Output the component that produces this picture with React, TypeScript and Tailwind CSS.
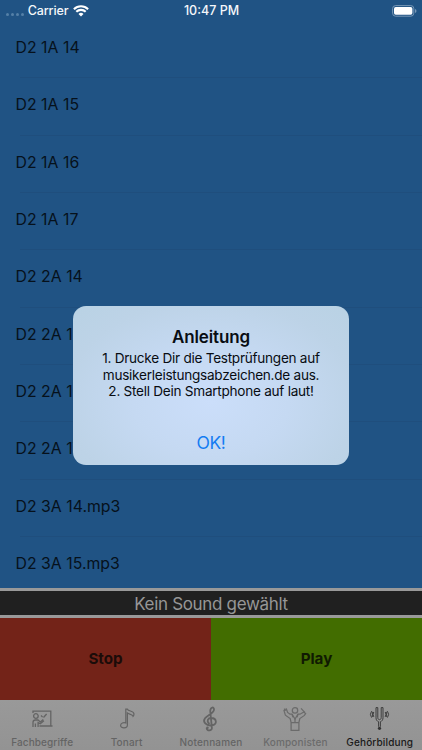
import React from "react";

const sounds = [
  "D2 1A 14",
  "D2 1A 15",
  "D2 1A 16",
  "D2 1A 17",
  "D2 2A 14",
  "D2 2A 15",
  "D2 2A 16",
  "D2 2A 17",
  "D2 3A 14.mp3",
  "D2 3A 15.mp3",
];

function StatusBar() {
  return (
    <div className="flex h-[21px] shrink-0 items-center pt-px text-[12.5px] font-medium text-[#f4f7fa]">
      <div className="flex flex-1 items-center pl-[6px]">
        <div className="mt-[7px] flex gap-[1.7px]">
          {[0, 1, 2, 3].map((i) => (
            <span key={i} className="h-[3.2px] w-[3.2px] rounded-full bg-[#5580a7]" />
          ))}
        </div>
        <span className="ml-[4px] tracking-[-0.15px]">Carrier</span>
        <svg className="ml-[5px]" width="16" height="12" viewBox="0 0 16 12" fill="none" stroke="#fff" strokeWidth="2.1">
          <path d="M.9 4.2a10.2 10.2 0 0 1 14.2 0M3.3 6.8a6.7 6.7 0 0 1 9.4 0" />
          <path d="M5.5 8.9a3.6 3.6 0 0 1 5 0L8 11.6z" fill="#fff" stroke="none" />
        </svg>
      </div>
      <span>10:47 PM</span>
      <div className="flex flex-1 justify-end pr-[5px] pb-px">
        <svg width="25" height="12" viewBox="0 0 25 12">
          <rect x=".6" y=".6" width="21.2" height="10.6" rx="3" fill="none" stroke="#7898b7" />
          <rect x="2" y="2" width="18.4" height="7.8" rx="1.7" fill="#fff" />
          <path d="M23 4v4q1.5-.5 1.5-2T23 4" fill="#7898b7" />
        </svg>
      </div>
    </div>
  );
}

function BoardIcon() {
  return (
    <svg className="ml-px" width="21" height="18" viewBox="0 0 21 18" fill="none" stroke="currentColor" strokeWidth="1.3">
      <path d="M1 3V1.2h17.8v14.3M7.5 16h13" />
      <circle cx="3.9" cy="6" r="2.3" />
      <path d="M1 17v-4.6q0-2.4 2.4-2.4H6l2.3 2 3-2.6M3.4 17v-3.6M6.1 17v-4.4l2.2 1.2 3.6-3M9 5.5l1.6 1.6M11.5 7.5 14.6 4" />
    </svg>
  );
}

function NoteIcon() {
  return (
    <svg className="ml-px" width="17" height="21" viewBox="0 0 17 21" fill="none" stroke="currentColor" strokeWidth="1.2">
      <path d="M6.8 15V1.2h1.6c1 2.2 6.6 1.6 6.6 4.8 0 1-.3 1.8-.9 2.4C13.3 6 10 6.4 8.4 5v12c0 3.8-6.8 3.6-6.8.6 0-2.6 3-3.4 5.2-2.6z" />
    </svg>
  );
}

function ClefIcon() {
  return (
    <svg width="19" height="26" viewBox="0 0 19 26" fill="none" stroke="currentColor" strokeWidth="1.8" strokeLinecap="round">
      <path d="M8 17.5c-2.6-2.2-1.2-5.5 2.2-5.5 5.4 0 6.8 6.6.6 7.4-5.6.7-9.5-3.6-6.8-7.2 2.4-3.1 8.4-4.6 9-8.4.2-3.4-3.4-3-3.8 1l1.7 17c.3 3.3-5 3.5-5.2.6" />
      <circle cx="6.5" cy="21.8" r="1.2" fill="currentColor" stroke="none" />
    </svg>
  );
}

function ConductorIcon() {
  return (
    <svg width="24" height="26" viewBox="0 0 24 26" fill="none" stroke="currentColor" strokeWidth="1.25">
      <circle cx="12" cy="4.4" r="2.7" />
      <path d="M9 8.2H7L4.6 6.4 3.6 3.6 1 4.6l1.4 4.6 4.8 3.4.9 3.9V24.4h7.8V16.5l.9-3.9 4.6-3.2 1.2-1.8-1.8-1.6L17 8.2h-2L12 13z" />
      <path d="M8.1 16.6h7.8M12 13v4M9 8.2l1 3M15 8.2l-1 3M21.8 6.4 18 2.4M2 4.2 1.2 2.6M3.2 3.7V2.2" />
    </svg>
  );
}

function ForkIcon() {
  return (
    <svg width="21" height="25" viewBox="0 0 21 25" fill="none" stroke="#3d3d3d" strokeWidth="1">
      <path d="M7 1.6v10.2c0 2 1 3.4 2.6 3.9v5.1M14 1.6v10.2c0 2-1 3.4-2.6 3.9v5.1M8.8 1.6v10c0 2.8 3.4 2.8 3.4 0v-10M7 1.6h1.8M12.2 1.6H14" />
      <circle cx="10.5" cy="22.3" r="1.6" fill="#333" stroke="none" />
      <path d="M2.6 5.2q-2.4 3.2 0 6.4M4.8 6q-1.8 2.4 0 4.8M3.7 5.8v5.2M18.4 5.2q2.4 3.2 0 6.4M16.2 6q1.8 2.4 0 4.8M17.3 5.8v5.2" />
    </svg>
  );
}

const tabs = [
  { label: "Fachbegriffe", icon: <BoardIcon />, style: "text-[#646464] tracking-[0.1px]" },
  { label: "Tonart", icon: <NoteIcon />, style: "text-[#646464] tracking-[0.15px]" },
  { label: "Notennamen", icon: <ClefIcon />, style: "text-[#646464] tracking-[0.15px]" },
  { label: "Komponisten", icon: <ConductorIcon />, style: "text-[#6b6b6b] tracking-[0.15px]" },
  { label: "Gehörbildung", icon: <ForkIcon />, style: "text-[#191919] tracking-[0.15px]" },
];

export default function App() {
  return (
    <main className="relative flex h-[750px] w-[422px] flex-col overflow-hidden bg-[#999] font-['Inter','Liberation_Sans',sans-serif]">
      <section className="flex h-[588px] shrink-0 flex-col overflow-hidden bg-[#205384]">
        <StatusBar />
        <ul className="shrink-0">
          {sounds.map((sound) => (
            <li key={sound} className="flex h-[57.35px] flex-col pl-[15.5px]">
              <span className="flex flex-1 items-center pb-[3px] text-[15.8px] tracking-[0.03px] text-[#06111b]">{sound}</span>
              <span className="ml-1 h-px bg-[#1f4e7d]" />
            </li>
          ))}
        </ul>
      </section>
      <div className="mt-[3px] flex h-[24px] shrink-0 items-center justify-center bg-[#202020] pt-[3px] text-[17px] tracking-[-0.32px] text-[#969696]">
        <span>Kein Sound gewählt</span>
      </div>
      <div className="mt-[3px] grid h-[82px] shrink-0 grid-cols-2 text-[15.2px] font-bold">
        <button className="bg-[#732318] text-[#1b0c09]">Stop</button>
        <button className="bg-[#426d00] text-[#101a02]">Play</button>
      </div>
      <nav className="grid flex-1 grid-cols-5 bg-linear-to-b from-[#999] to-[#939393]">
        {tabs.map((tab) => (
          <div key={tab.label} className={`flex flex-col items-center ${tab.style}`}>
            <div className="flex h-[37px] items-center justify-center">{tab.icon}</div>
            <span className="text-[10px] leading-[11px] font-medium">{tab.label}</span>
          </div>
        ))}
      </nav>
      <div
        role="dialog"
        className="absolute top-[306px] left-[73px] flex h-[159px] w-[276px] flex-col items-center rounded-[13px] bg-[#bdd3e7] bg-[radial-gradient(ellipse_at_50%_60%,#cbdefa_0%,#c5d9f2_40%,#bdd3e7_75%,#b9d2e4_100%)] pt-[20px] text-center text-[#080c12]"
      >
        <h1 className="text-[17px] leading-[22px] font-semibold tracking-[-0.15px]">Anleitung</h1>
        <p className="mt-[2px] text-[13.6px] leading-[16.5px] tracking-[-0.27px] whitespace-nowrap">
          <span className="block">1. Drucke Dir die Testprüfungen auf</span>
          <span className="block">musikerleistungsabzeichen.de aus.</span>
          <span className="block">2. Stell Dein Smartphone auf laut!</span>
        </p>
        <button className="mt-[32px] text-[17.5px] leading-[22px] tracking-[-0.4px] text-[#147cf2]">OK!</button>
      </div>
    </main>
  );
}
